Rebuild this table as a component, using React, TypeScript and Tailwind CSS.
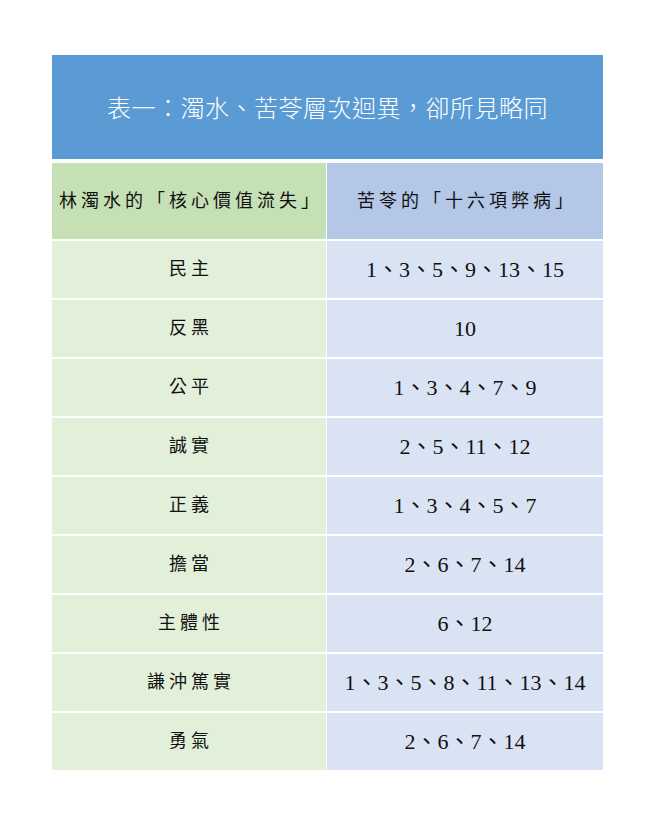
import React from "react";

const rows: [string, string][] = [
  ["民主", "1、3、5、9、13、15"],
  ["反黑", "10"],
  ["公平", "1、3、4、7、9"],
  ["誠實", "2、5、11、12"],
  ["正義", "1、3、4、5、7"],
  ["擔當", "2、6、7、14"],
  ["主體性", "6、12"],
  ["謙沖篤實", "1、3、5、8、11、13、14"],
  ["勇氣", "2、6、7、14"],
];

const body = {
  fontFamily: '"Liberation Serif", "Noto Sans CJK TC", serif',
};

export default function App() {
  return (
    <div className="w-[656px] h-[816px] bg-white pt-[55px] pl-[52px]">
      <div className="w-[551px]">
        <div
          className="h-[104px] bg-[#5b9bd5] flex items-center justify-center text-white text-[24px] leading-none"
          style={{ fontFamily: '"Noto Sans CJK TC", "Noto Sans", sans-serif' }}
        >
          <span className="font-light tracking-[0.5px]">表一：濁水、苦苓層次迴異，卻所見略同</span>
        </div>
        <div
          className="mt-[4px] grid grid-cols-[274px_276px] gap-x-[1px] gap-y-[2px] text-[#111111]"
          style={body}
        >
          <div className="h-[76px] bg-[#c5e0b4] flex items-center justify-center text-[18px] tracking-[4px] pl-[4px]">
            林濁水的「核心價值流失」
          </div>
          <div className="h-[76px] bg-[#b4c7e7] flex items-center justify-center text-[18px] tracking-[4px] pl-[4px]">
            苦苓的「十六項弊病」
          </div>
          {rows.map(([a, b]) => (
            <React.Fragment key={a}>
              <div className="h-[57px] bg-[#e2efd9] flex items-center justify-center text-[18px] tracking-[4px] pl-[4px]">
                {a}
              </div>
              <div className="h-[57px] bg-[#dae3f3] flex items-center justify-center text-[22px]">
                {b}
              </div>
            </React.Fragment>
          ))}
        </div>
      </div>
    </div>
  );
}
